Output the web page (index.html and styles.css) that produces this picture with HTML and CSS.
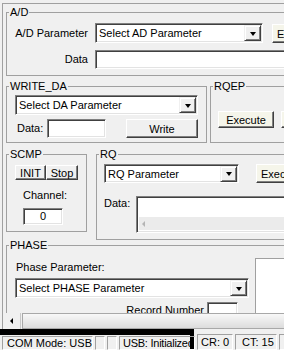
FILE: index.html
```html
<!DOCTYPE html>
<html lang="en">
<head>
  <meta charset="UTF-8" />
  <title>Device Control</title>
  <link rel="stylesheet" href="styles.css">
</head>
<body>
  <div class="form">
    <div class="panel">
      <div class="group ad">
        <span class="caption">A/D</span>
        <div class="ad-grid">
          <label>A/D Parameter</label>
          <div class="combo"><span>Select AD Parameter</span><i class="drop"></i></div>
          <button class="btn cream e-btn">E</button>
          <label>Data</label>
          <div class="edit ad-data"></div>
        </div>
      </div>

      <div class="row row2">
        <div class="group writeda">
          <span class="caption">WRITE_DA</span>
          <div class="combo"><span>Select DA Parameter</span><i class="drop"></i></div>
          <div class="wd-row">
            <label class="wd-label">Data:</label>
            <div class="edit wd-data"></div>
            <button class="btn write-btn">Write</button>
          </div>
        </div>
        <div class="group rqep">
          <span class="caption">RQEP</span>
          <div class="rqep-row">
            <button class="btn cream exec-btn">Execute</button>
            <button class="btn cream exec-btn"></button>
          </div>
        </div>
      </div>

      <div class="row row3">
        <div class="group scmp">
          <span class="caption">SCMP</span>
          <div class="scmp-btns">
            <button class="btn init-btn">INIT</button>
            <button class="btn stop-btn">Stop</button>
          </div>
          <div class="channel">
            <label>Channel:</label>
            <div class="edit ch-edit">0</div>
          </div>
        </div>
        <div class="group rq">
          <span class="caption">RQ</span>
          <div class="rq-top">
            <div class="combo rq-combo"><span>RQ Parameter</span><i class="drop"></i></div>
            <button class="btn cream rq-exec">Execute</button>
          </div>
          <div class="rq-data">
            <label>Data:</label>
            <div class="edit memo">
              <div class="memo-scroll"><span class="arrow-left faint"></span></div>
            </div>
          </div>
        </div>
      </div>

      <div class="group phase">
        <span class="caption">PHASE</span>
        <div class="phase-body">
          <div class="phase-left">
            <label class="phase-label">Phase Parameter:</label>
            <div class="combo phase-combo"><span>Select PHASE Parameter</span><i class="drop"></i></div>
            <div class="record">
              <label>Record Number</label>
              <div class="edit rec-edit"></div>
            </div>
          </div>
          <div class="listbox"></div>
        </div>
      </div>
    </div>

    <div class="hscroll">
      <div class="sb-btn"><span class="arrow-left"></span></div>
      <div class="sb-thumb"></div>
    </div>
  </div>

  <div class="statusbar">
    <div class="sb-left">
      <div class="sb-panel com">COM Mode: USB</div>
      <div class="sb-panel tiny"></div>
      <div class="sb-panel tiny2"></div>
      <div class="sb-panel usb">USB: Initialized</div>
    </div>
    <div class="sb-right">
      <div class="sb-panel cr">CR: 0</div>
      <div class="sb-panel ct">CT: 15</div>
      <div class="sb-panel last"></div>
    </div>
  </div>
</body>
</html>
```

FILE: styles.css
```css
* {
  box-sizing: border-box;
}
body {
  margin: 0;
  width: 284px;
  height: 350px;
  overflow: hidden;
  background: #f0f0f0;
  font-family: "Liberation Sans", Arial, sans-serif;
  font-size: 11px;
  color: #000;
}
label {
  line-height: 13px;
  white-space: nowrap;
}
.form {
  margin: 3px 0 0 2px;
  height: 326px;
  border-left: 1px solid #a0a0a0;
  border-top: 1px solid #a0a0a0;
}
.panel {
  height: 309px;
  width: 320px;
  overflow: hidden;
  padding-left: 3px;
}
.group {
  position: relative;
  flex-shrink: 0;
  border: 1px solid #a0a0a0;
}
.caption {
  position: absolute;
  top: -7px;
  left: 2px;
  padding: 0 1px;
  line-height: 13px;
  background: #f0f0f0;
}
.row {
  display: flex;
  align-items: flex-start;
}

/* controls */
.combo {
  display: flex;
  align-items: center;
  flex-shrink: 0;
  height: 20px;
  padding-left: 3px;
  background: #fff;
  border: 1px solid;
  border-color: #808080 #fff #fff #808080;
  box-shadow: inset 1px 1px 0 #404040, inset -1px -1px 0 #e3e3e3;
  white-space: nowrap;
}
.drop {
  margin-left: auto;
  margin-right: 1px;
  width: 17px;
  height: 16px;
  display: flex;
  align-items: center;
  justify-content: center;
  background: #f0f0f0;
  border: 1px solid;
  border-color: #f0f0f0 #404040 #404040 #f0f0f0;
  box-shadow: inset 1px 1px 0 #fff, inset -1px -1px 0 #808080;
}
.drop::after {
  content: "";
  border-left: 3px solid transparent;
  border-right: 3px solid transparent;
  border-top: 4px solid #000;
  margin-top: 1px;
}
.edit {
  flex-shrink: 0;
  height: 19px;
  background: #fff;
  border: 1px solid;
  border-color: #808080 #fff #fff #808080;
  box-shadow: inset 1px 1px 0 #404040, inset -1px -1px 0 #e3e3e3;
}
.btn {
  flex-shrink: 0;
  font: inherit;
  color: #000;
  padding: 0;
  background: #f0f0f0;
  border: 1px solid;
  border-color: #fff #404040 #404040 #fff;
  box-shadow: inset -1px -1px 0 #808080;
}
.btn.cream {
  background: #f5f5ea;
}

/* A/D */
.ad {
  margin-top: 8px;
  width: 300px;
  height: 64px;
}
.ad-grid {
  display: grid;
  grid-template-columns: 81px 168px 40px;
  grid-template-rows: 20px 19px;
  column-gap: 7px;
  row-gap: 7px;
  padding-top: 10px;
}
.ad-grid label {
  align-self: center;
  text-align: right;
}
.e-btn {
  margin-left: 2px;
  margin-top: 1px;
  height: 19px;
  text-align: left;
  padding-left: 4px;
}
.ad-data {
  grid-column: 2 / 4;
  width: 220px;
}

/* WRITE_DA / RQEP */
.row2 {
  margin-top: 10px;
  gap: 3px;
}
.writeda {
  width: 201px;
  height: 57px;
  padding: 8px 8px 0 8px;
}
.wd-row {
  display: flex;
  align-items: center;
  margin-top: 4px;
  padding-left: 2px;
}
.wd-label {
  width: 30px;
}
.wd-data {
  width: 59px;
}
.write-btn {
  margin-left: auto;
  width: 72px;
  height: 19px;
}
.rqep {
  width: 110px;
  height: 57px;
  padding: 24px 0 0 7px;
}
.rqep-row {
  display: flex;
  gap: 7px;
}
.exec-btn {
  width: 56px;
  height: 17px;
}

/* SCMP / RQ */
.row3 {
  margin-top: 11px;
  gap: 9px;
}
.scmp {
  width: 81px;
  height: 78px;
  padding: 10px 0 0 8px;
}
.scmp-btns {
  display: flex;
}
.init-btn {
  width: 31px;
  height: 15px;
}
.stop-btn {
  width: 32px;
  height: 15px;
}
.channel {
  display: flex;
  flex-direction: column;
  align-items: flex-start;
  gap: 6px;
  margin-top: 9px;
  padding-left: 8px;
}
.ch-edit {
  width: 40px;
  height: 17px;
  line-height: 15px;
  text-align: center;
}
.rq {
  width: 220px;
  height: 86px;
  padding: 9px 0 0 7px;
}
.rq-top {
  display: flex;
  gap: 17px;
}
.rq-combo {
  width: 135px;
  height: 19px;
}
.rq-exec {
  width: 60px;
  height: 19px;
  text-align: left;
  padding-left: 4px;
}
.rq-data {
  display: flex;
  margin-top: 13px;
}
.rq-data label {
  width: 32px;
  flex-shrink: 0;
  margin-top: 1px;
}
.memo {
  width: 160px;
  height: 37px;
  display: flex;
  align-items: flex-end;
  padding: 2px 0 2px 2px;
}
.memo-scroll {
  width: 100%;
  height: 13px;
  background: #ebebeb;
  display: flex;
  align-items: center;
  padding-left: 3px;
}

/* PHASE */
.phase {
  margin-top: 5px;
  width: 320px;
  height: 100px;
  padding: 15px 0 0 8px;
}
.phase-body {
  display: flex;
  align-items: flex-start;
}
.phase-left {
  flex-shrink: 0;
  width: 234px;
}
.phase-label {
  display: block;
  margin-left: 1px;
}
.phase-combo {
  margin-top: 4px;
}
.record {
  display: flex;
  justify-content: flex-end;
  align-items: center;
  gap: 3px;
  margin-top: 4px;
  padding-right: 11px;
}
.rec-edit {
  width: 31px;
  height: 17px;
}
.listbox {
  flex-shrink: 0;
  margin-left: 6px;
  margin-top: -3px;
  width: 60px;
  height: 70px;
  background: #fff;
  border: 1px solid #a0a0a0;
}

/* form scrollbar */
.hscroll {
  display: flex;
  height: 16px;
}
.sb-btn {
  width: 18px;
  display: flex;
  align-items: center;
  justify-content: center;
  background: #f0f0f0;
  border-right: 1px solid #c8c8c8;
}
.arrow-left {
  border-top: 3px solid transparent;
  border-bottom: 3px solid transparent;
  border-right: 3px solid #000;
}
.arrow-left.faint {
  border-right-color: #b4b4b4;
}
.sb-thumb {
  flex: 1;
  margin-left: 1px;
  background: linear-gradient(#f8f8f8, #dcdcdc);
  border: 1px solid #a8a8a8;
  border-right: none;
}

/* status bar */
.statusbar {
  display: flex;
  height: 21px;
}
.sb-left {
  display: flex;
  flex-shrink: 0;
  width: 194px;
  border-top: 6px solid #000;
  border-right: 4px solid #000;
  padding: 1px 0 0 2px;
  gap: 2px;
}
.sb-panel {
  flex-shrink: 0;
  height: 100%;
  border: 1px solid;
  border-color: #a0a0a0 #fff #fff #a0a0a0;
  line-height: 12px;
  padding: 0 4px;
  white-space: nowrap;
}
.com {
  width: 91px;
}
.tiny {
  width: 7px;
}
.tiny2 {
  width: 5px;
}
.usb {
  flex: 1;
  padding: 0 0 0 3px;
  letter-spacing: -0.25px;
}
.sb-right {
  display: flex;
  gap: 2px;
  padding: 5px 0 0 3px;
}
.sb-right .sb-panel {
  line-height: 14px;
}
.cr {
  width: 36px;
  padding-left: 3px;
}
.ct {
  width: 42px;
  padding-left: 6px;
}
.last {
  width: 20px;
}
```
